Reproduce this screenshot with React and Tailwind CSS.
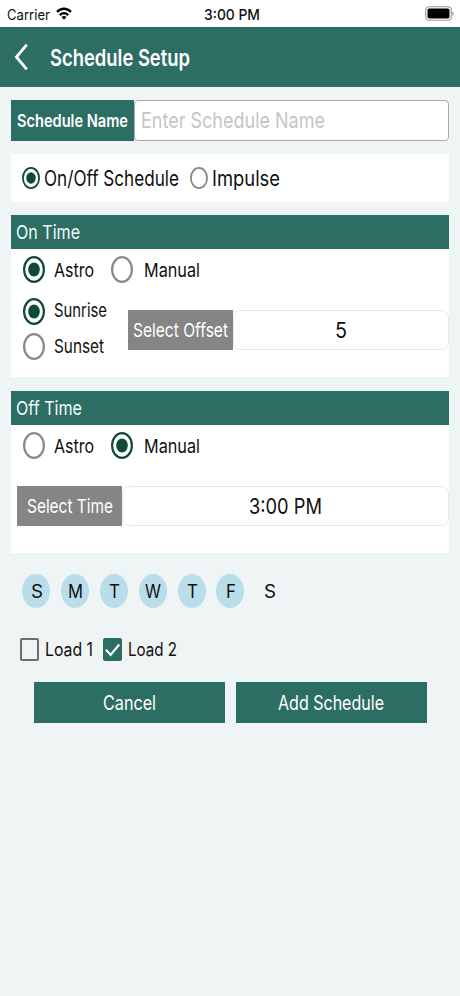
import { useLayoutEffect, useRef, useState } from "react";

// Condensed label: squeezes its text horizontally to fill the width of its box.
function Label({ children, className = "" }) {
  const box = useRef(null);
  const text = useRef(null);
  const [scale, setScale] = useState(1);
  useLayoutEffect(() => {
    setScale(box.current.offsetWidth / text.current.getBoundingClientRect().width);
  }, []);
  return (
    <span ref={box} className={"block shrink-0 whitespace-nowrap leading-6 " + className}>
      <span ref={text} className="inline-block origin-left" style={{ transform: `scaleX(${scale})` }}>
        {children}
      </span>
    </span>
  );
}

function Radio({ checked, small }) {
  return (
    <svg
      viewBox="0 0 22 27"
      preserveAspectRatio="none"
      className={small ? "h-[22px] w-[18px] shrink-0" : "h-[27px] w-[22px] shrink-0"}
    >
      <ellipse cx="11" cy="13.5" rx="9.9" ry="12.3" fill="none" stroke={checked ? "#0e4a36" : "#8a8a8a"} strokeWidth="2.2" />
      {checked && <ellipse cx="11" cy="13.5" rx="5.8" ry="7.1" fill="#0e4a36" />}
    </svg>
  );
}

function SectionTitle({ children, className }) {
  return (
    <div className="flex h-[34px] items-center bg-[#2d6e64] pl-[5px] pt-[2px] text-[19px] text-[#f0faf8]">
      <Label className={className}>{children}</Label>
    </div>
  );
}

function ModeRow({ manual }) {
  return (
    <div className="flex h-[41px] items-center pl-[11.5px] text-[19px]">
      <Radio checked={!manual} />
      <Label className="ml-[9px] mt-[2px] w-[40px]">Astro</Label>
      <span className="ml-[17px]"><Radio checked={manual} /></span>
      <Label className="ml-[11px] mt-[2px] w-[56px]">Manual</Label>
    </div>
  );
}

const days = [
  ["S", "w-[12px]"],
  ["M", "w-[15px]"],
  ["T", "w-[11px]"],
  ["W", "w-[16px]"],
  ["T", "w-[11px]"],
  ["F", "w-[10px]"],
  ["S", "w-[12px]"],
];

export default function App() {
  return (
    <div className="h-[996px] w-[460px] overflow-hidden bg-[#eff4f5] font-['Inter',sans-serif] text-[#101010]">
      <div className="flex h-[27px] items-center bg-white pl-[7px] pr-[6px] pt-[2px] text-[14.5px]">
        <Label className="w-[43px]">Carrier</Label>
        <svg viewBox="0 0 16 13" className="ml-[6px] mt-[-2px] h-[13px] w-[16px]" fill="none" stroke="#000" strokeWidth="2.3">
          <path d="M1 4.9C5 .7 11 .7 15 4.9" />
          <path d="M3.8 8.1C6.2 5.5 9.8 5.5 12.2 8.1" />
          <path d="M8 12.8L5.5 10C7 8.6 9 8.6 10.5 10Z" fill="#000" stroke="none" />
        </svg>
        <Label className="ml-[132px] w-[56px] text-[15px] font-[550]">3:00 PM</Label>
        <svg viewBox="0 0 29 15" className="ml-auto mt-[-2px] h-[15px] w-[29px]">
          <rect x=".7" y=".7" width="25.6" height="13.6" rx="3.5" fill="none" stroke="#999" strokeWidth="1.1" />
          <rect x="2.5" y="2.5" width="22" height="10" rx="1.7" fill="#000" />
          <path d="M27.4 5.2c1.6.6 1.6 4 0 4.6z" fill="#999" />
        </svg>
      </div>

      <header className="flex h-[60px] items-center bg-[#2d6e64] pl-[14px] text-white">
        <svg viewBox="0 0 15 28" className="h-7 w-[15px]" fill="none" stroke="#fff" strokeWidth="2.8">
          <path d="M12.8 1.6L2.4 14L12.8 26.4" />
        </svg>
        <Label className="ml-[21px] mt-[2px] w-[140px] text-[22.5px] font-semibold">Schedule Setup</Label>
      </header>

      <main className="pl-[11px] pr-[11.5px] pt-[13px]">
        <div className="flex h-[41px]">
          <div className="flex w-[123px] items-center bg-[#2d6e64] pl-[6px] text-[17.5px] font-semibold text-white">
            <Label className="w-[111px]">Schedule Name</Label>
          </div>
          <div className="flex flex-1 items-center rounded-[4px] border border-[#a9a9a9] bg-white pb-px pl-[6px] text-[22px] text-[#c5c5c8]">
            <Label className="w-[184px]">Enter Schedule Name</Label>
          </div>
        </div>

        <div className="mt-[13px] flex h-12 items-center bg-white pl-[10.5px] text-[21px]">
          <Radio checked small />
          <Label className="ml-[4px] mt-[2px] w-[135px]">On/Off Schedule</Label>
          <span className="ml-[11px] flex"><Radio small /></span>
          <Label className="ml-[4px] mt-[2px] w-[68px]">Impulse</Label>
        </div>

        <section className="mt-[13px] h-[162px] bg-white">
          <SectionTitle className="w-[64px]">On Time</SectionTitle>
          <ModeRow />
          <div className="flex">
            <div className="w-[117px] pl-[11.5px] pt-[7.5px] text-[18.5px]">
              <div className="flex h-[27px] items-center">
                <Radio checked />
                <Label className="-mt-[3px] ml-[9px] w-[53px]">Sunrise</Label>
              </div>
              <div className="mt-[8.5px] flex h-[27px] items-center">
                <Radio />
                <Label className="-mt-px ml-[9px] w-[50px]">Sunset</Label>
              </div>
            </div>
            <div className="mt-5 flex h-10 flex-1">
              <div className="flex w-[105px] items-center bg-[#858585] pl-[5px] pt-[2px] text-[19px] text-white">
                <Label className="w-[95px]">Select Offset</Label>
              </div>
              <div className="flex flex-1 items-center justify-center rounded-[7px] border border-[#e8eaea] text-[22px]">
                <Label className="w-[12px]">5</Label>
              </div>
            </div>
          </div>
        </section>

        <section className="mt-[14px] h-[162px] bg-white">
          <SectionTitle className="w-[66px]">Off Time</SectionTitle>
          <ModeRow manual />
          <div className="ml-[6px] mt-5 flex h-10">
            <div className="flex w-[105px] items-center bg-[#858585] pl-[10px] pt-[2px] text-[19px] text-white">
              <Label className="w-[86px]">Select Time</Label>
            </div>
            <div className="flex flex-1 items-center justify-center rounded-[7px] border border-[#e8eaea] text-[22px]">
              <Label className="w-[73px]">3:00 PM</Label>
            </div>
          </div>
        </section>

        <div className="ml-[11px] mt-[21px] flex gap-[10.9px] text-[18px]">
          {days.map(([day, width], i) => (
            <div
              key={i}
              className={
                "flex h-[34px] w-7 items-center justify-center rounded-[50%] pl-px pt-px " + (i < 6 ? "bg-[#b9deea]" : "")
              }
            >
              <Label className={width}>{day}</Label>
            </div>
          ))}
        </div>

        <div className="ml-[9px] mt-[29px] flex h-6 items-center text-[18px]">
          <span className="h-[23px] w-[19px] rounded-[2px] border-2 border-[#6e6e6e]" />
          <Label className="ml-[6px] mt-px w-[48px]">Load 1</Label>
          <svg viewBox="0 0 19 23" className="ml-[10px] h-[23px] w-[19px]">
            <rect width="19" height="23" rx="2" fill="#2d6e64" />
            <path d="M3 11.8L7.6 17L16.2 6.5" fill="none" stroke="#fff" strokeWidth="2.1" />
          </svg>
          <Label className="ml-[6px] mt-px w-[49px]">Load 2</Label>
        </div>

        <div className="ml-[22.5px] mr-[22px] mt-[21px] flex h-[40.5px] gap-[11px] text-[19.5px] text-white">
          <button className="flex flex-1 items-center justify-center bg-[#2d6e64] pt-px">
            <Label className="w-[53px]">Cancel</Label>
          </button>
          <button className="flex flex-1 items-center justify-center bg-[#2d6e64] pt-px">
            <Label className="w-[106px]">Add Schedule</Label>
          </button>
        </div>
      </main>
    </div>
  );
}
